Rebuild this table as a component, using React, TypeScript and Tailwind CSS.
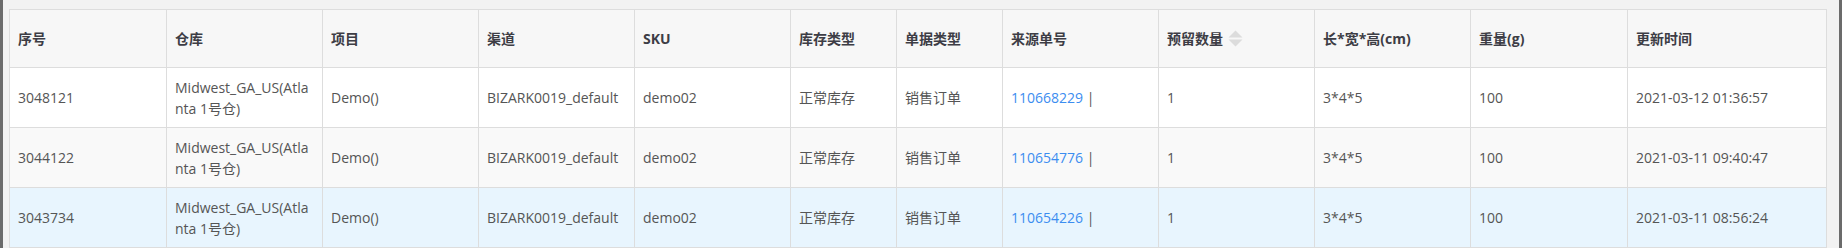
const columns = [
  { title: "序号", width: 157 },
  { title: "仓库", width: 156 },
  { title: "项目", width: 156 },
  { title: "渠道", width: 156 },
  { title: "SKU", width: 156 },
  { title: "库存类型", width: 106 },
  { title: "单据类型", width: 106 },
  { title: "来源单号", width: 156 },
  { title: "预留数量", width: 156, sortable: true },
  { title: "长*宽*高(cm)", width: 156 },
  { title: "重量(g)", width: 157 },
  { title: "更新时间", width: 199 },
];

const rows = [
  { id: "3048121", source: "110668229", time: "2021-03-12 01:36:57" },
  { id: "3044122", source: "110654776", time: "2021-03-11 09:40:47" },
  { id: "3043734", source: "110654226", time: "2021-03-11 08:56:24" },
];

const rowBg = ["bg-white", "bg-[#f9f9f9]", "bg-[#e8f5fe]"];

function SortIcon() {
  return (
    <svg width="15" height="17" viewBox="0 0 15 17" className="ml-[5px] shrink-0">
      <path d="M7.5 0.5 L14.5 7.5 L0.5 7.5 Z" fill="#dcdcdc" />
      <path d="M0.5 9.5 L14.5 9.5 L7.5 16.5 Z" fill="#dcdcdc" />
    </svg>
  );
}

export default function App() {
  const cell = "border border-[#dddddd] px-[8px] align-middle break-all";
  return (
    <div
      className="h-[248px] w-full overflow-hidden border-x-[3px] border-[#6b6b6b] bg-[#f2f2f2] pl-[6px] pt-[9px]"
      style={{ fontFamily: '"Open Sans", "Noto Sans CJK SC", sans-serif' }}
    >
      <table className="w-[1817px] table-fixed border-collapse text-[14px] leading-[21px]">
        <colgroup>
          {columns.map((c) => (
            <col key={c.title} style={{ width: c.width }} />
          ))}
        </colgroup>
        <thead>
          <tr className="bg-[#f7f7f7]">
            {columns.map((c) => (
              <th key={c.title} className={`${cell} h-[58px] text-left font-bold text-[#3d3d45]`}>
                <div className="flex items-center">
                  <span>{c.title}</span>
                  {c.sortable && <SortIcon />}
                </div>
              </th>
            ))}
          </tr>
        </thead>
        <tbody className="text-[#555555]">
          {rows.map((r, i) => (
            <tr key={r.id} className={rowBg[i]}>
              <td className={`${cell} h-[60px]`}>{r.id}</td>
              <td className={cell}>Midwest_GA_US(Atlanta 1号仓)</td>
              <td className={cell}>Demo()</td>
              <td className={cell}>BIZARK0019_default</td>
              <td className={cell}>demo02</td>
              <td className={cell}>正常库存</td>
              <td className={cell}>销售订单</td>
              <td className={cell}>
                <span className="text-[#3c8df0]">{r.source}</span> |
              </td>
              <td className={cell}>1</td>
              <td className={cell}>3*4*5</td>
              <td className={cell}>100</td>
              <td className={cell}>{r.time}</td>
            </tr>
          ))}
        </tbody>
      </table>
    </div>
  );
}
